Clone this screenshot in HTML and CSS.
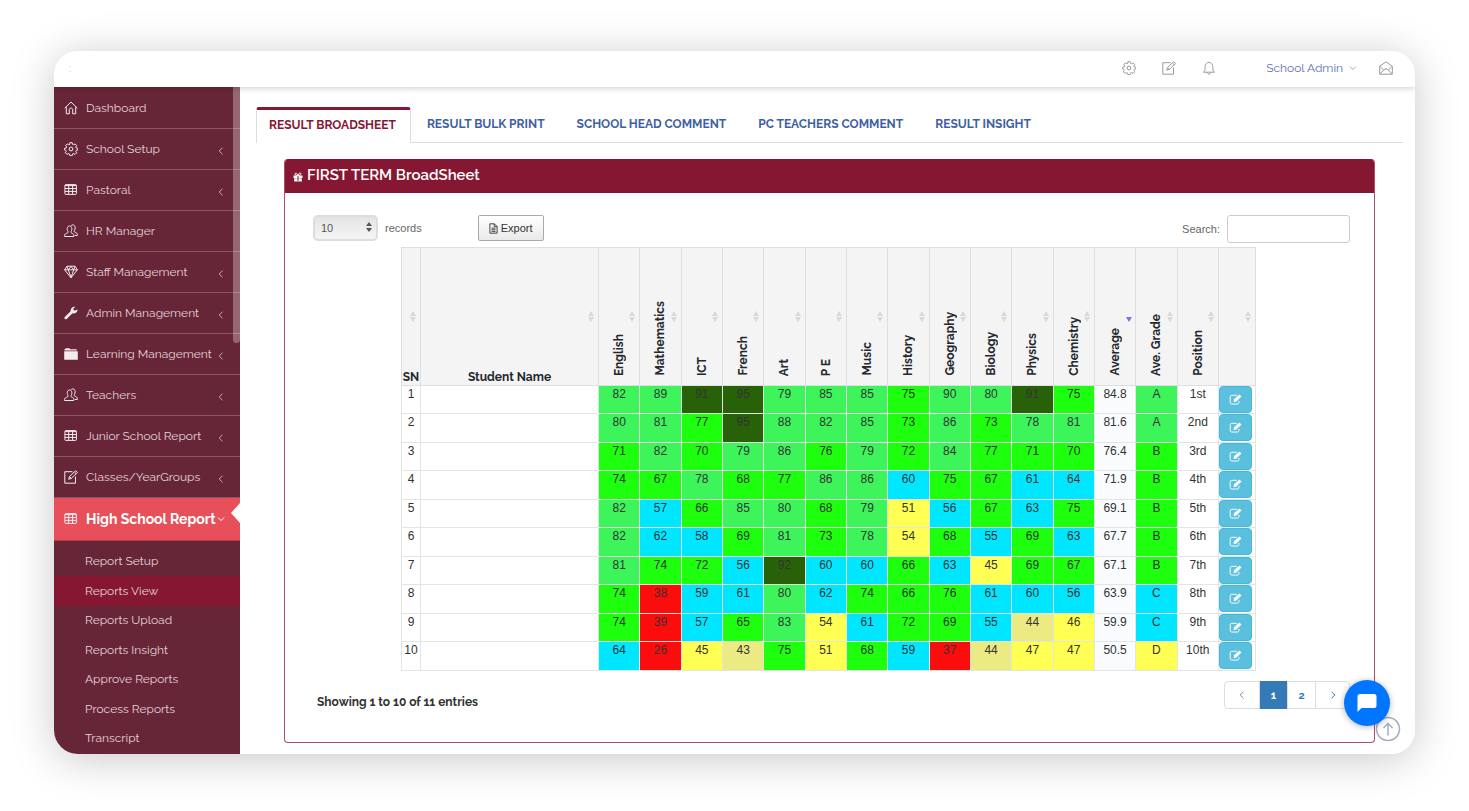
FILE: index.html
```html
<!DOCTYPE html>
<html lang="en">
<head>
<meta charset="utf-8">
<title>Result Broadsheet</title>
<link rel="stylesheet" href="styles.css">
</head>
<body>
<svg class="sprite" aria-hidden="true">
  <symbol id="i-home" viewBox="0 0 14 14"><path d="M.7 7.2 7 1l6.3 6.2M2.3 6.2v6.6h3V8.6c0-2 3.400-2 3.400 0v4.200h3V6.200" /></symbol>
  <symbol id="i-gear" viewBox="0 0 14 14"><circle cx="7" cy="7" r="1.900"/><path d="M5.800.7h2.400l.4 1.700 1 .4 1.500-.9 1.600 1.600-.9 1.500.4 1 1.700.4v1.500l-1.700.4-.4 1 .9 1.500-1.600 1.600-1.500-.9-1 .4-.4 1.700H5.800l-.4-1.700-1-.4-1.500.9-1.600-1.600.9-1.500-.4-1L.5 7.900V6.400L2.200 6l.4-1-.9-1.500 1.600-1.600 1.500.9 1-.4z"/></symbol>
  <symbol id="i-grid" viewBox="0 0 14 14"><rect x=".9" y="1.600" width="11.500" height="9.800" rx=".8"/><path d="M1 2.600h11.400M1 5.500h11.400M1 8.400h11.400M4.700 2v9.400M8.600 2v9.400"/></symbol>
  <symbol id="i-users" viewBox="0 0 14 14"><path d="M4 7.500C2.400 4.500 3.500 2 5.500 2s3.200 2.500 1.600 5.500c-.5 1 .2 1.500 1.400 2 1.500.6 1.500 1.700 1.300 3H.6c-.2-1.600.2-2.400 1.600-3 1.300-.5 2.200-1 1.800-2zM7 1.800C8 .4 11 .4 11.200 3.500c.1 1.300-.5 2.300-.9 3.200-.4 1.200.5 1.500 1.500 1.900 1.400.6 1.600 1.300 1.500 2.900h-2.500"/></symbol>
  <symbol id="i-gem" viewBox="0 0 14 14"><path d="M3 1.200h8l2.400 3.600L7 12.800.6 4.800zM.6 4.800h12.800M4.300 4.800 7 12.500l2.700-7.700M3 1.400l1.300 3.400L7 1.400l2.700 3.400L11 1.400"/></symbol>
  <symbol id="i-wrench" viewBox="0 0 14 14"><path class="solid" d="M13.500 3.600a3.700 3.700 0 0 1-5 3.600l-5.800 5.700c-1.500 1-2.900-.5-1.900-1.900l5.800-5.700C6.200 2.500 8.500.2 11.400.8L9.300 2.700l.3 1.500 1.500.3z"/></symbol>
  <symbol id="i-folder" viewBox="0 0 14 14"><path class="solid" d="M1 2.300 1.700 1.300h3.800l.7.900h6.500v1.300H.5V2.300zM.2 4.200h13.600v8.500H.2z"/></symbol>
  <symbol id="i-edit" viewBox="0 0 14 14"><path d="M8.500 1.700H.8v11.500h10.700V6.500M4.700 9.300l.8-2.800L11.700.7l1.800 1.700-6.200 6zM10.400 2l1.700 1.700M5.500 6.500l1.800 1.900"/></symbol>
  <symbol id="i-bell" viewBox="0 0 14 14"><path d="M1.500 11.200c1.600-1.200 1.600-2.600 1.600-4.700C3.100 3.300 4.500 1.300 7 1.300s3.900 2 3.900 5.200c0 2.100 0 3.500 1.600 4.700zM5.500 11.500c.2 2.300 2.800 2.300 3 0"/></symbol>
  <symbol id="i-mail" viewBox="0 0 14 14"><path d="M.7 5.200 7 .9l6.300 4.300v8H.7zM.9 13l4-4.200c1.300-1.300 2.900-1.300 4.200 0l4 4.200M.9 5.400l3.700 3.700M13.100 5.400 9.400 9.100"/></symbol>
  <symbol id="i-left" viewBox="0 0 8 10"><path d="M5.500 1.700 2.200 5l3.300 3.300"/></symbol>
  <symbol id="i-right" viewBox="0 0 8 10"><path d="M2.500 1.700 5.800 5 2.500 8.300"/></symbol>
  <symbol id="i-down" viewBox="0 0 8 10"><path d="M1 3.500 4 6.600l3-3.100"/></symbol>
  <symbol id="i-gift" viewBox="0 0 10 10"><path class="solid" d="M.5 3.500h9V6h-9zM1.200 6.300h7.600V9.500H1.200z"/><path d="M5 3.300C3.800.5 1.900.8 2 2.200c.1.900 1.500 1.200 3 1.100C8.500 3.400 8.200.8 7 1c-.9.100-1.500 1-2 2.300"/><path class="slot" d="M5 4v5"/></symbol>
  <symbol id="i-file" viewBox="0 0 10 12"><path d="M1 .8h5L9 3.800v7.400H1zM5.800.8V4H9M2.800 5.600h4.400M2.800 7.400h4.400M2.800 9.200h4.400"/></symbol>
  <symbol id="i-pen" viewBox="0 0 14 14"><path d="M8.500 2.500H3A1.700 1.700 0 0 0 1.300 4.200v6A1.700 1.700 0 0 0 3 11.900h6a1.700 1.700 0 0 0 1.700-1.700V8.500"/><path class="solid" d="m5 9.600.3-2.800 5.900-5.300 2.200 2.300-5.800 5.600z"/></symbol>
</svg>

<div class="app">
  <header class="topbar">
    <span class="brand">:</span>
    <nav class="tools" aria-label="Account">
      <a href="#" aria-label="Settings"><svg class="icon"><use href="#i-gear"/></svg></a>
      <a href="#" aria-label="Compose"><svg class="icon"><use href="#i-edit"/></svg></a>
      <a href="#" aria-label="Notifications"><svg class="icon"><use href="#i-bell"/></svg></a>
      <a href="#" class="user">School Admin <svg class="caret"><use href="#i-down"/></svg></a>
      <a href="#" aria-label="Messages"><svg class="icon"><use href="#i-mail"/></svg></a>
    </nav>
  </header>

  <div class="body">
    <aside class="sidebar">
      <ul class="menu">
        <li><a href="#"><svg class="icon"><use href="#i-home"/></svg><span>Dashboard</span></a></li>
        <li><a href="#"><svg class="icon"><use href="#i-gear"/></svg><span>School Setup</span><svg class="caret"><use href="#i-left"/></svg></a></li>
        <li><a href="#"><svg class="icon"><use href="#i-grid"/></svg><span>Pastoral</span><svg class="caret"><use href="#i-left"/></svg></a></li>
        <li><a href="#"><svg class="icon"><use href="#i-users"/></svg><span>HR Manager</span></a></li>
        <li><a href="#"><svg class="icon"><use href="#i-gem"/></svg><span>Staff Management</span><svg class="caret"><use href="#i-left"/></svg></a></li>
        <li><a href="#"><svg class="icon"><use href="#i-wrench"/></svg><span>Admin Management</span><svg class="caret"><use href="#i-left"/></svg></a></li>
        <li><a href="#"><svg class="icon"><use href="#i-folder"/></svg><span>Learning Management</span><svg class="caret"><use href="#i-left"/></svg></a></li>
        <li><a href="#"><svg class="icon"><use href="#i-users"/></svg><span>Teachers</span><svg class="caret"><use href="#i-left"/></svg></a></li>
        <li><a href="#"><svg class="icon"><use href="#i-grid"/></svg><span>Junior School Report</span><svg class="caret"><use href="#i-left"/></svg></a></li>
        <li><a href="#"><svg class="icon"><use href="#i-edit"/></svg><span>Classes/YearGroups</span><svg class="caret"><use href="#i-left"/></svg></a></li>
        <li class="active"><a href="#"><svg class="icon"><use href="#i-grid"/></svg><span>High School Report</span><svg class="caret"><use href="#i-down"/></svg></a></li>
      </ul>
      <ul class="submenu">
        <li><a href="#">Report Setup</a></li>
        <li class="current"><a href="#">Reports View</a></li>
        <li><a href="#">Reports Upload</a></li>
        <li><a href="#">Reports Insight</a></li>
        <li><a href="#">Approve Reports</a></li>
        <li><a href="#">Process Reports</a></li>
        <li><a href="#">Transcript</a></li>
      </ul>
    </aside>

    <main class="content">
      <nav class="tabs" aria-label="Results">
        <a href="#" class="on">RESULT BROADSHEET</a>
        <a href="#">RESULT BULK PRINT</a>
        <a href="#">SCHOOL HEAD COMMENT</a>
        <a href="#">PC TEACHERS COMMENT</a>
        <a href="#">RESULT INSIGHT</a>
      </nav>

      <section class="panel">
        <h2><svg class="gift"><use href="#i-gift"/></svg>FIRST TERM BroadSheet</h2>
        <div class="panel-body">
          <div class="controls">
            <span class="select"><select id="size"><option>10</option><option>25</option></select></span>
            <label for="size">records</label>
            <button type="button" class="export"><svg><use href="#i-file"/></svg>Export</button>
            <label for="search" class="search-label">Search:</label>
            <input id="search" type="search">
          </div>
          <div class="sheet">
            <table>
              <colgroup>
                <col class="c-sn"><col class="c-name"><col span="15"><col class="c-act">
              </colgroup>
              <thead>
                <tr>
                  <th>SN</th><th>Student Name</th>
                  <th><span>English</span></th><th><span>Mathematics</span></th><th><span>ICT</span></th>
                  <th><span>French</span></th><th><span>Art</span></th><th><span>P E</span></th>
                  <th><span>Music</span></th><th><span>History</span></th><th><span>Geography</span></th>
                  <th><span>Biology</span></th><th><span>Physics</span></th><th><span>Chemistry</span></th>
                  <th class="sorted"><span>Average</span></th><th><span>Ave. Grade</span></th>
                  <th><span>Position</span></th><th></th>
                </tr>
              </thead>
              <tbody id="rows"></tbody>
            </table>
          </div>
          <div class="summary">
            <p>Showing 1 to 10 of 11 entries</p>
            <nav class="pages" aria-label="Pages">
              <a href="#" class="arrow off" aria-label="Previous"><svg><use href="#i-left"/></svg></a>
              <a href="#" class="on">1</a>
              <a href="#">2</a>
              <a href="#" class="arrow" aria-label="Next"><svg><use href="#i-right"/></svg></a>
            </nav>
          </div>
        </div>
      </section>
    </main>
  </div>

  <button type="button" class="to-top" aria-label="Back to top"><svg viewBox="0 0 26 26"><circle cx="13" cy="13" r="11.500"/><path d="M13 19.500V7.500M8.500 12 13 7.300 17.500 12"/></svg></button>
  <button type="button" class="chat" aria-label="Open chat"><svg viewBox="0 0 20 20"><path d="M3 1h14a2.500 2.500 0 0 1 2.500 2.500v9A2.500 2.500 0 0 1 17 15H4.500L.5 19V3.500A2.500 2.500 0 0 1 3 1z"/></svg></button>
</div>
<script src="app.js"></script>
</body>
</html>
```
FILE: styles.css
```css
* { box-sizing: border-box; }

body {
  margin: 0;
  padding: 51px 54px 57px;
  min-height: 100vh;
  display: flex;
  background: #fff;
  color: #333;
  font-family: Raleway, "Open Sans", sans-serif;
  font-size: 12px;
}

a { color: inherit; text-decoration: none; }
ul { margin: 0; padding: 0; list-style: none; }
button { padding: 0; cursor: pointer; }
svg { display: block; fill: none; stroke: currentColor; stroke-width: 1; flex: none; }
.solid { fill: currentColor; stroke: none; }
.sprite { position: absolute; width: 0; height: 0; }
.icon { width: 14px; height: 14px; }
.caret { width: 8px; height: 10px; }

.app {
  position: relative;
  flex: 1;
  min-width: 0;
  display: flex;
  flex-direction: column;
  border-radius: 24px;
  overflow: hidden;
  background: #fff;
}
body::before {
  content: "";
  position: absolute;
  inset: 51px 54px 57px;
  border-radius: 24px;
  box-shadow: 0 5px 44px rgba(0, 0, 0, .22);
}

/* Top bar */
.topbar {
  position: relative;
  z-index: 1;
  height: 36px;
  flex: none;
  display: flex;
  align-items: center;
  justify-content: space-between;
  padding: 0 22px 2px 15px;
  box-shadow: 0 2px 5px rgba(0, 0, 0, .16);
  background: #fff;
}
.brand { color: #c8c2b8; font-size: 12px; }
.tools { display: flex; align-items: center; gap: 26px; color: #999; }
.user { display: flex; align-items: center; gap: 6px; margin: 0 -4px 0 24px; color: #5a72b5; }
.user .caret { color: #aaa; }

.body { flex: 1; display: flex; min-height: 0; }

/* Sidebar */
.sidebar {
  position: relative;
  width: 186px;
  flex: none;
  background: #672637;
  color: #e2d3d7;
}
.sidebar::after {
  content: "";
  position: absolute;
  top: 0;
  right: 0;
  width: 7px;
  height: 256px;
  border-radius: 0 0 4px 4px;
  background: rgba(255, 255, 255, .3);
}
.menu { padding-top: 1px; }
.menu a {
  display: flex;
  align-items: center;
  gap: 8px;
  height: 41px;
  padding: 0 15px 0 10px;
  border-bottom: 1px solid #8a5663;
}
.menu span { flex: 1; min-width: 0; white-space: nowrap; }
.menu .icon { color: #f3ecee; }
.menu .caret { margin: 4px 0 0 -8px; color: #c9adb4; }
.menu .active { position: relative; }
.menu .active a {
  height: 43px;
  border-bottom-color: #b13a47;
  background: #e7505a;
  color: #fff;
  font-size: 14px;
  font-weight: 700;
}
.menu .active .caret { margin-top: 0; color: #fff; }
.menu .active::after {
  content: "";
  position: absolute;
  top: 5px;
  right: 0;
  border: solid transparent;
  border-width: 10px 9px 10px 0;
  border-right-color: #fff;
}
.submenu { padding-top: 6px; }
.submenu a { display: block; padding-left: 31px; line-height: 29px; }
.submenu li:nth-child(even) a { line-height: 30px; }
.submenu .current { background: #861732; }

/* Content */
.content { flex: 1; min-width: 0; padding: 20px 12px 11px 16px; }
.tabs {
  display: flex;
  height: 36px;
  border-bottom: 1px solid #ddd;
  color: #3f5fa3;
  font-size: 12px;
  font-weight: 700;
}
.tabs a { padding: 0 16px; line-height: 34px; white-space: nowrap; }
.tabs .on {
  height: 36px;
  padding: 0 14px 0 12px;
  line-height: 30px;
  border: 1px solid #ddd;
  border-top: 3px solid #861732;
  border-bottom: 0;
  border-radius: 3px 3px 0 0;
  background: #fff;
  color: #861732;
}

.panel {
  margin: 16px 28px 0;
  border: 1px solid #a8506a;
  border-top: 0;
  border-radius: 4px;
  overflow: hidden;
}
.panel h2 {
  display: flex;
  align-items: center;
  gap: 4px;
  height: 34px;
  margin: 0;
  padding: 0 8px 2px;
  background: #861732;
  color: #fff;
  font-size: 15px;
  font-weight: 600;
}
.gift { width: 10px; height: 10px; margin-top: 4px; }
.slot { stroke: #861732; }
.panel-body { padding: 22px 24px 31px 28px; }

.controls {
  display: flex;
  height: 28px;
  color: #666;
  font-family: "Liberation Sans", sans-serif;
  font-size: 11px;
}
.controls label { line-height: 26px; }
.select { position: relative; width: 65px; margin-right: 7px; }
.select::before, .select::after {
  content: "";
  position: absolute;
  right: 6px;
  border: solid transparent;
}
.select::before { top: 7px; border-width: 0 3px 4px; border-bottom-color: #555; }
.select::after { top: 13px; border-width: 4px 3px 0; border-top-color: #555; }
select {
  appearance: none;
  width: 100%;
  height: 26px;
  padding: 0 6px;
  border: 2px solid #ddd;
  border-radius: 5px;
  background: linear-gradient(#e4e4e4, #f5f5f5);
  color: #555;
  font: 11px "Liberation Sans", sans-serif;
}
.export {
  display: flex;
  align-items: center;
  justify-content: center;
  gap: 3px;
  width: 66px;
  height: 26px;
  margin-left: 56px;
  border: 1px solid #aaa;
  border-radius: 2px;
  background: linear-gradient(#fff, #e9e9e9);
  color: #333;
  font: 11px "Liberation Sans", sans-serif;
}
.export svg { width: 9px; height: 11px; }
.search-label { margin-left: auto; padding-top: 1px; }
input {
  width: 123px;
  height: 28px;
  margin-left: 7px;
  border: 1px solid #ccc;
  border-radius: 3px;
  background: #fff;
}

/* Broadsheet table */
.sheet { padding: 4px 94px 0 88px; }
table {
  width: 100%;
  table-layout: fixed;
  border-collapse: collapse;
}
.c-sn { width: 19px; }
.c-name { width: 178px; }
.c-act { width: 37px; }
th, td { padding: 0; border: 1px solid #dfdfdf; text-align: center; }
th {
  position: relative;
  height: 138px;
  padding-bottom: 1px;
  background: #f4f4f4;
  color: #25292f;
  font-size: 12px;
  font-weight: 700;
  vertical-align: bottom;
  white-space: nowrap;
}
th span {
  display: inline-block;
  margin-bottom: 8px;
  writing-mode: vertical-rl;
  transform: rotate(180deg);
  line-height: 16px;
  vertical-align: bottom;
}
th::before, th::after {
  content: "";
  position: absolute;
  right: 4px;
  border: solid transparent;
}
th::before { top: 63px; border-width: 0 3px 5px; border-bottom-color: #d9d9d9; }
th::after { top: 69px; border-width: 5px 3px 0; border-top-color: #d9d9d9; }
.sorted::before { display: none; }
.sorted::after { right: 3px; border-top-color: #7777e0; }

tbody tr { height: 28px; }
tbody tr:nth-child(even) { height: 29px; }
td {
  border-color: #e0e6e0;
  color: #333;
  font-family: "Liberation Sans", sans-serif;
  font-size: 12px;
  line-height: 16px;
  vertical-align: top;
}
td.top { background: #286208; }
td.high { background: #3df45b; }
td.good { background: #1dff0e; }
td.fair { background: #00e6ff; }
td.low { background: #ffff54; }
td.poor { background: #ecea82; }
td.fail { background: #fb0d0d; }
td.avg { background: #fafbff; }
.edit {
  display: flex;
  align-items: center;
  justify-content: center;
  width: 33px;
  height: 27px;
  border: 1px solid #46b8da;
  border-radius: 4px;
  background: #5bc0de;
  color: #fff;
}
.edit svg { width: 13px; height: 13px; }

.summary {
  display: flex;
  justify-content: space-between;
  align-items: flex-start;
  padding-top: 10px;
}
.summary p { margin: 13px 0 0 4px; line-height: 17px; font-size: 12px; font-weight: 700; }
.pages {
  display: flex;
  height: 28px;
  border: 1px solid #ddd;
  border-radius: 4px;
  color: #337ab7;
  font-size: 11px;
  font-weight: 700;
}
.pages a {
  display: flex;
  align-items: center;
  justify-content: center;
  width: 28px;
}
.pages a + a { border-left: 1px solid #ddd; }
.pages .arrow { width: 34px; }
.pages .off { color: #888; }
.pages .on { margin: -1px 0; background: #337ab7; color: #fff; }
.pages svg { width: 8px; height: 10px; }

/* Floating buttons */
.to-top, .chat {
  position: absolute;
  border: 0;
  border-radius: 50%;
}
.to-top {
  right: 14px;
  bottom: 12px;
  width: 26px;
  height: 26px;
  background: none;
  color: #a3adbd;
}
.to-top svg { stroke-width: 1.5; }
.chat {
  right: 25px;
  bottom: 28px;
  display: flex;
  align-items: center;
  justify-content: center;
  width: 46px;
  height: 46px;
  background: #0075ff;
  box-shadow: 0 1px 6px rgba(0, 0, 0, .3);
  color: #fff;
}
.chat svg { width: 20px; height: 20px; fill: currentColor; stroke: none; }
```
FILE: app.js
```js
const results = [
  [[82, 89, 91, 95, 79, 85, 85, 75, 90, 80, 91, 75], "84.8", "A", "1st"],
  [[80, 81, 77, 95, 88, 82, 85, 73, 86, 73, 78, 81], "81.6", "A", "2nd"],
  [[71, 82, 70, 79, 86, 76, 79, 72, 84, 77, 71, 70], "76.4", "B", "3rd"],
  [[74, 67, 78, 68, 77, 86, 86, 60, 75, 67, 61, 64], "71.9", "B", "4th"],
  [[82, 57, 66, 85, 80, 68, 79, 51, 56, 67, 63, 75], "69.1", "B", "5th"],
  [[82, 62, 58, 69, 81, 73, 78, 54, 68, 55, 69, 63], "67.7", "B", "6th"],
  [[81, 74, 72, 56, 92, 60, 60, 66, 63, 45, 69, 67], "67.1", "B", "7th"],
  [[74, 38, 59, 61, 80, 62, 74, 66, 76, 61, 60, 56], "63.9", "C", "8th"],
  [[74, 39, 57, 65, 83, 54, 61, 72, 69, 55, 44, 46], "59.9", "C", "9th"],
  [[64, 26, 45, 43, 75, 51, 68, 59, 37, 44, 47, 47], "50.5", "D", "10th"]
];

const bands = [[91, "top"], [78, "high"], [65, "good"], [55, "fair"], [45, "low"], [40, "poor"], [0, "fail"]];
const gradeBand = { A: "high", B: "good", C: "fair", D: "low" };
const band = mark => bands.find(([min]) => mark >= min)[1];

document.getElementById("rows").innerHTML = results.map(([marks, average, grade, position], i) => `
  <tr>
    <td>${i + 1}</td><td></td>
    ${marks.map(mark => `<td class="${band(mark)}">${mark}</td>`).join("")}
    <td class="avg">${average}</td><td class="${gradeBand[grade]}">${grade}</td><td>${position}</td>
    <td><button type="button" class="edit" aria-label="Edit result ${i + 1}"><svg><use href="#i-pen"/></svg></button></td>
  </tr>`).join("");
```
